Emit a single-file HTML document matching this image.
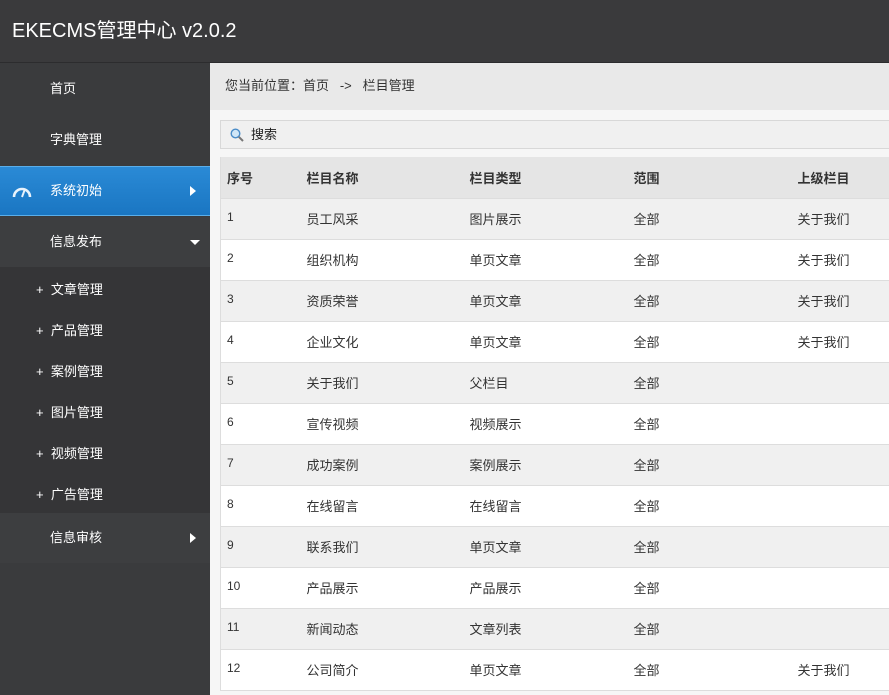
<!DOCTYPE html>
<html><head><meta charset="utf-8"><style>
*{margin:0;padding:0;box-sizing:border-box}
body{width:889px;height:695px;overflow:hidden;font-family:"Liberation Sans","Noto Sans CJK SC",sans-serif;font-size:13px;background:#f6f6f6;position:relative}
.hd{position:absolute;left:0;top:0;width:889px;height:63px;background:#3a3a3c;color:#fff;font-size:20px;line-height:63px;padding-left:12px;border-bottom:1px solid #2c2c2e}
.sb{position:absolute;left:0;top:63px;width:210px;height:632px;background:#3a3b3d}
.it{position:absolute;left:0;width:210px;color:#fff;font-size:13px;padding-left:50px}
.sub{position:absolute;left:0;top:204px;width:210px;height:246px;background:#353537}
.si{position:absolute;left:36px;color:#fff;font-size:13px}
.act{background:linear-gradient(#2a8ad6,#1a76c2);border-top:1px solid #5aaeea;border-bottom:1px solid #5aaeea}
.ar{position:absolute;right:14px;top:50%;margin-top:-5px;width:0;height:0;border-left:6px solid #fff;border-top:5px solid transparent;border-bottom:5px solid transparent}
.dn{position:absolute;right:10px;top:50%;margin-top:-2px;border-top:5px solid #fff;border-left:5px solid transparent;border-right:5px solid transparent}
.bc{position:absolute;left:210px;top:63px;width:679px;height:47px;background:#e9e9e9;color:#333;line-height:46px;padding-left:15px}
.srch{position:absolute;left:220px;top:120px;width:680px;height:29px;border:1px solid #d8d8d8;background:#f0f0f0;line-height:27px;padding-left:30px;color:#222}
table{position:absolute;left:220px;top:157px;width:700px;border-collapse:collapse;border-left:1px solid #ddd}
td,th{height:41px;text-align:left;border-bottom:1px solid #ddd;color:#333;font-weight:normal;padding:0}
th{background:#e5e5e5;font-weight:bold;color:#333;height:41px}
tr:nth-child(even) td{background:#f0f0f0}
tr:nth-child(odd) td{background:#fff}
td.n{vertical-align:top;padding-top:11px;font-size:12px}
.c1{width:86px;padding-left:6px}.c2{width:163px}.c3{width:164px}.c4{width:164px}
</style></head><body>
<div class="hd">EKECMS管理中心 v2.0.2</div>
<div class="sb">
<div class="it" style="top:0;height:51px;line-height:51px">首页</div>
<div class="it" style="top:51px;height:52px;line-height:52px">字典管理</div>
<div class="it act" style="top:103px;height:50px;line-height:48px">
<svg style="position:absolute;left:11px;top:17px" width="22" height="14" viewBox="0 0 22 14"><path d="M3 13 A8 8 0 0 1 19 13" fill="none" stroke="#e8f2fb" stroke-width="2.6"/><path d="M11 13 L14 5" stroke="#e8f2fb" stroke-width="2"/></svg>
系统初始<span class="ar"></span></div>
<div class="it" style="top:154px;height:50px;line-height:50px;background:#3d3e40">信息发布<span class="dn"></span></div>
<div class="sub">
<div class="si" style="top:12px">+&nbsp; 文章管理</div>
<div class="si" style="top:53px">+&nbsp; 产品管理</div>
<div class="si" style="top:94px">+&nbsp; 案例管理</div>
<div class="si" style="top:135px">+&nbsp; 图片管理</div>
<div class="si" style="top:176px">+&nbsp; 视频管理</div>
<div class="si" style="top:217px">+&nbsp; 广告管理</div>
</div>
<div class="it" style="top:450px;height:50px;line-height:50px;background:#3d3e40">信息审核<span class="ar"></span></div>
</div>
<div class="bc">您当前位置：首页 &nbsp; -&gt; &nbsp; 栏目管理</div>
<div class="srch"><svg style="position:absolute;left:9px;top:7px" width="14" height="14" viewBox="0 0 14 14"><circle cx="5.5" cy="5.5" r="4.3" fill="#cfe6f7" stroke="#4a8cc8" stroke-width="1.4"/><path d="M8.8 8.8 L13 13" stroke="#777" stroke-width="2"/></svg>搜索</div>
<table>
<tr><th class="c1">序号</th><th class="c2">栏目名称</th><th class="c3">栏目类型</th><th class="c4">范围</th><th>上级栏目</th></tr>
<tr><td class="n c1">1</td><td>员工风采</td><td>图片展示</td><td>全部</td><td>关于我们</td></tr>
<tr><td class="n c1">2</td><td>组织机构</td><td>单页文章</td><td>全部</td><td>关于我们</td></tr>
<tr><td class="n c1">3</td><td>资质荣誉</td><td>单页文章</td><td>全部</td><td>关于我们</td></tr>
<tr><td class="n c1">4</td><td>企业文化</td><td>单页文章</td><td>全部</td><td>关于我们</td></tr>
<tr><td class="n c1">5</td><td>关于我们</td><td>父栏目</td><td>全部</td><td></td></tr>
<tr><td class="n c1">6</td><td>宣传视频</td><td>视频展示</td><td>全部</td><td></td></tr>
<tr><td class="n c1">7</td><td>成功案例</td><td>案例展示</td><td>全部</td><td></td></tr>
<tr><td class="n c1">8</td><td>在线留言</td><td>在线留言</td><td>全部</td><td></td></tr>
<tr><td class="n c1">9</td><td>联系我们</td><td>单页文章</td><td>全部</td><td></td></tr>
<tr><td class="n c1">10</td><td>产品展示</td><td>产品展示</td><td>全部</td><td></td></tr>
<tr><td class="n c1">11</td><td>新闻动态</td><td>文章列表</td><td>全部</td><td></td></tr>
<tr><td class="n c1">12</td><td>公司简介</td><td>单页文章</td><td>全部</td><td>关于我们</td></tr>
</table>
</body></html>
